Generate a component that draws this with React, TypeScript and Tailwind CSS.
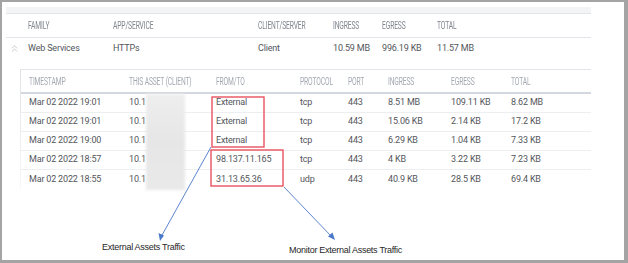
import React from "react";
import { ChevronsUp } from "lucide-react";

interface FlowRow {
  timestamp: string;
  direction: string;
  protocol: string;
  ingress: string;
  egress: string;
  total: string;
}

const flowRows: FlowRow[] = [
  { timestamp: "Mar 02 2022 19:01", direction: "External", protocol: "tcp", ingress: "8.51 MB", egress: "109.11 KB", total: "8.62 MB" },
  { timestamp: "Mar 02 2022 19:01", direction: "External", protocol: "tcp", ingress: "15.06 KB", egress: "2.14 KB", total: "17.2 KB" },
  { timestamp: "Mar 02 2022 19:00", direction: "External", protocol: "tcp", ingress: "6.29 KB", egress: "1.04 KB", total: "7.33 KB" },
  { timestamp: "Mar 02 2022 18:57", direction: "98.137.11.165", protocol: "tcp", ingress: "4 KB", egress: "3.22 KB", total: "7.23 KB" },
  { timestamp: "Mar 02 2022 18:55", direction: "31.13.65.36", protocol: "udp", ingress: "40.9 KB", egress: "28.5 KB", total: "69.4 KB" },
];

const outerCols = "grid grid-cols-[22px_85px_145px_75px_49px_55px_1fr] items-center";
const innerCols = "grid grid-cols-[100px_87px_84px_48px_40px_63px_60px_1fr] items-center pl-[8px]";

const Head = ({ children }: { children: React.ReactNode }) => (
  <span className="inline-block origin-left scale-x-[0.67] whitespace-nowrap text-[10px] uppercase">
    {children}
  </span>
);

const App = () => {
  return (
    <div className="relative w-[628px] h-[263px] overflow-hidden border-l-2 border-t-2 border-r-4 border-b-[3px] border-[#a4a4a4] bg-white font-['Roboto',sans-serif] text-[9px] tracking-[-0.02em] text-[#53565b]">
      <div className="pl-[4px] pt-[5px]">
        <div className="w-[585px]">
          <div className="h-[7px] border-b border-[#e2e5e9] bg-[#f3f4f6]" />

          {/* family summary */}
          <div className={`${outerCols} h-[24px] border-b border-[#e1e4e8] text-[#7f858e]`}>
            <div />
            <Head>Family</Head>
            <Head>App/Service</Head>
            <Head>Client/Server</Head>
            <Head>Ingress</Head>
            <Head>Egress</Head>
            <Head>Total</Head>
          </div>
          <div className={`${outerCols} h-[21px]`}>
            <div className="flex pl-[3px] text-[#b4b9c1]">
              <ChevronsUp size={11} strokeWidth={1.6} />
            </div>
            <span>Web Services</span>
            <span>HTTPs</span>
            <span>Client</span>
            <span>10.59 MB</span>
            <span>996.19 KB</span>
            <span>11.57 MB</span>
          </div>

          {/* connection details */}
          <div className="ml-[14px] mt-[10px] flex border-t border-[#e1e4e8]">
            <div className="w-px bg-gradient-to-b from-[#dfe2e6] to-[#f7f8f9]" />
            <div className="relative flex-1">
              <div className={`${innerCols} h-[24px] border-b-2 border-[#d3d8de] text-[#a3a9b2]`}>
                <Head>Timestamp</Head>
                <Head>This Asset (Client)</Head>
                <Head>From/To</Head>
                <Head>Protocol</Head>
                <Head>Port</Head>
                <Head>Ingress</Head>
                <Head>Egress</Head>
                <Head>Total</Head>
              </div>
              {flowRows.map((row, i) => (
                <div
                  key={i}
                  className={`${innerCols} h-[19px] ${
                    i < flowRows.length - 1 ? "border-b border-[#eceef1]" : ""
                  }`}
                >
                  <span>{row.timestamp}</span>
                  <span>10.1</span>
                  <span>{row.direction}</span>
                  <span>{row.protocol}</span>
                  <span>443</span>
                  <span>{row.ingress}</span>
                  <span>{row.egress}</span>
                  <span>{row.total}</span>
                </div>
              ))}
              {/* redacted addresses */}
              <div className="absolute left-[125px] top-[24px] h-[96px] w-[39px] bg-gradient-to-b from-[#eeeeee] via-[#e6e6e6] to-[#e9e9e9] blur-[1.5px]" />
            </div>
          </div>

          <div className="mt-[52px] flex items-start font-['Liberation_Sans',sans-serif] text-[9px] tracking-[-0.03em] text-[#1f1f1f]">
            <div className="ml-[96px] w-[187px]">External Assets Traffic</div>
            <div className="mt-[3px]">Monitor External Assets Traffic</div>
          </div>
        </div>
      </div>

      <svg
        className="pointer-events-none absolute -left-[2px] -top-[2px]"
        width="628"
        height="263"
        viewBox="0 0 628 263"
      >
        <rect x="212" y="97" width="52" height="50" fill="none" stroke="#e9525e" strokeWidth="1.4" />
        <rect x="211" y="150" width="72" height="36" fill="none" stroke="#e9525e" strokeWidth="1.4" />
        <line x1="211" y1="147" x2="161" y2="237" stroke="#4a78c8" strokeWidth="0.9" />
        <polygon points="160,241 158.5,233 164,235.5" fill="#4a78c8" />
        <line x1="284" y1="187" x2="332" y2="237" stroke="#4a78c8" strokeWidth="0.9" />
        <polygon points="335,240 328,236.5 332.5,232.5" fill="#4a78c8" />
      </svg>
    </div>
  );
};

export default App;
